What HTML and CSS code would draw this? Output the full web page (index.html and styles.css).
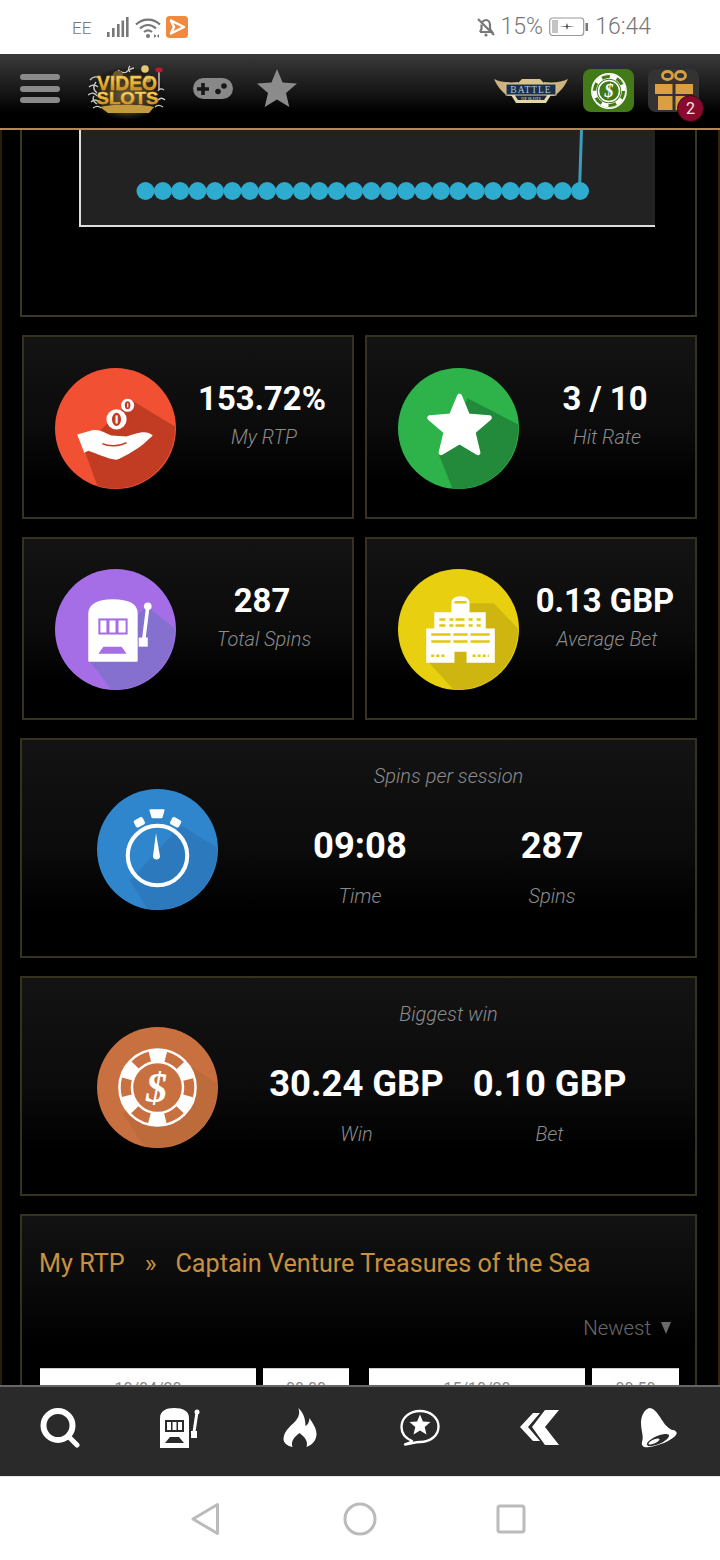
FILE: index.html
```html
<!DOCTYPE html>
<html lang="en">
<head>
<meta charset="utf-8">
<title>My RTP</title>
<link rel="stylesheet" href="styles.css">
</head>
<body>
<div class="screen">
  <div class="status">
    <span class="carrier">EE</span>
    <svg class="ic-signal" viewBox="0 0 22 20"><rect x="0" y="15" width="2.6" height="5"/><rect x="5" y="11" width="2.6" height="9"/><rect x="10" y="7" width="2.6" height="13"/><rect x="14.5" y="3.5" width="2.6" height="16.5"/><rect x="19" y="0" width="2.6" height="20"/></svg>
    <svg class="ic-wifi" viewBox="0 0 26 21"><path class="st" d="M1 7.5C8 1 18 1 25 7.5"/><path class="st" d="M5 11.5C10 7 16 7 21 11.5"/><path class="st" d="M9 15C11.500 13 14.500 13 17 15"/><circle class="sf" cx="13" cy="19" r="2"/><path class="sf" d="M19 17l2.500 2-2.500 2zM24 17l-2 2 2 2z"/></svg>
    <svg class="ic-app" viewBox="0 0 22 22"><rect width="22" height="22" rx="3.500" fill="#ef8b3e"/><path d="M5 4.500L18 11 5 17.500 8 11z" fill="none" stroke="#fff" stroke-width="2.500" stroke-linejoin="round"/></svg>
    <span class="status-fill"></span>
    <svg class="ic-belloff" viewBox="0 0 20 20"><path class="st" d="M4 15h12l-2-3V8c0-3-2-5-4-5-1.500 0-3 .8-3.800 2.200M5.500 7.500V12L4 15"/><path class="st" d="M2 2l16 16"/><circle class="sf" cx="10" cy="18" r="1.600"/></svg>
    <span class="status-text pct">15%</span>
    <svg class="ic-batt" viewBox="0 0 40 20"><rect x=".7" y="1" width="34" height="17.500" rx="3" fill="none" stroke="#999" stroke-width="1.200"/><rect x="3" y="3" width="6" height="13" fill="#c4c4c4"/><path d="M10 10l7-1 1-3 1 3 7 0-7 1-1 3-1-3z" fill="#555"/><rect x="36.500" y="6" width="2.500" height="8" fill="#777"/></svg>
    <span class="status-text clock">16:44</span>
  </div>

  <header class="topbar">
    <div class="burger"><span></span><span></span><span></span></div>
    <svg class="logo" viewBox="0 0 78 58">
      <defs>
        <radialGradient id="glow" cx=".5" cy=".55" r=".5"><stop offset="0" stop-color="#6a5a38"/><stop offset=".7" stop-color="#2e2618"/><stop offset="1" stop-color="#000" stop-opacity="0"/></radialGradient>
        <linearGradient id="gold" x1="0" y1="0" x2="0" y2="1"><stop offset="0" stop-color="#ffe88a"/><stop offset=".55" stop-color="#e8b030"/><stop offset="1" stop-color="#a8700f"/></linearGradient>
      </defs>
      <ellipse cx="39" cy="30" rx="39" ry="28" fill="url(#glow)"/>
      <path d="M2 18c3-4 8-4 10-1M1 25c3-3 7-2 9 0M0 33c4-3 7-2 9 1M3 40c3-3 6-2 8 0M5 46c3-2 6-2 8 0M8 20c-3 4-3 8 1 11M6 34c-2 3 0 6 3 8" class="swirl"/>
      <path d="M76 28c-3-2-5-1-6 1M77 38c-3-3-5-2-7 0M75 45c-3-2-6-2-8 0M30 8c3 3 6 3 9 2M38 10c3-2 5-4 8-4M42 4c-2 2-2 4 0 6" class="swirl"/>
      <circle cx="57" cy="7" r="3.800" fill="#e2c870"/><circle cx="60" cy="17" r="3.400" fill="#a98b55"/><circle cx="30" cy="14" r="5.500" fill="#6a5630"/>
      <path d="M71 9v18" stroke="#ccc" stroke-width="1.400"/><ellipse cx="71" cy="8" rx="3.600" ry="2.400" fill="#c3182c"/>
      <path d="M12 45c10-3 44-3 54 0l-5 6H20z" fill="#c49a3e"/>
      <text class="logo-v" x="39" y="28" text-anchor="middle" textLength="60" lengthAdjust="spacingAndGlyphs">VIDEO</text>
      <text class="logo-s" x="39.500" y="42" text-anchor="middle" textLength="62" lengthAdjust="spacingAndGlyphs">SLOTS</text>
    </svg>
    <svg class="pad" viewBox="0 0 40 22"><rect width="40" height="21" rx="10.500" fill="#888"/><path d="M4 11h12M10 5v12" stroke="#181818" stroke-width="3.600"/><circle cx="31" cy="8" r="2.800" fill="#181818"/><circle cx="25" cy="13.500" r="2.800" fill="#181818"/></svg>
    <svg class="fav" viewBox="0 0 40 38"><polygon points="20,0 25.600,13.400 40,14.500 29,24 32.300,38 20,30.500 7.700,38 11,24 0,14.500 14.400,13.400" fill="#8b8b8b"/></svg>
    <span class="top-fill"></span>
    <svg class="battle" viewBox="0 0 74 26">
      <path d="M0 1C6 4 14 5 24 4V18H14C8 14 3 8 0 1ZM74 1C68 4 60 5 50 4V18H60C66 14 71 8 74 1Z" fill="#cdb47e"/>
      <path d="M24 5L28 1H46L50 5V7H24Z" fill="#d9c48c"/>
      <rect x="12" y="6" width="50" height="11" fill="#16304e" stroke="#d9c48c"/>
      <text class="battle-t" x="37" y="15" text-anchor="middle">BATTLE</text>
      <path d="M17 17H57L52 25H22Z" fill="#e6d7a8"/>
      <path d="M21 17.500H53L50 22H24Z" fill="#1c2a3a"/>
      <text class="battle-s" x="37" y="21.500" text-anchor="middle">OF SLOTS</text>
    </svg>
    <div class="tile tile-green">
      <svg class="tile-chip" viewBox="0 0 36 36"><circle cx="18" cy="18" r="17.200" fill="none" stroke="#fff" stroke-width="1.400"/><circle cx="18" cy="18" r="14.500" fill="none" stroke="#fff" stroke-width="4.500"/><circle cx="18" cy="18" r="14.500" fill="none" stroke="#417a16" stroke-width="3.200" stroke-dasharray="8 7.180"/><circle cx="18" cy="18" r="10.500" fill="#417a16" stroke="#fff" stroke-width="1.500"/><text class="chip-mini" x="18" y="24" text-anchor="middle">$</text></svg>
    </div>
    <div class="tile tile-gift">
      <svg class="gift" viewBox="0 0 38 40"><ellipse cx="12.500" cy="5.500" rx="5" ry="4" fill="none" stroke="#d9a03f" stroke-width="2.800"/><ellipse cx="25.500" cy="5.500" rx="5" ry="4" fill="none" stroke="#d9a03f" stroke-width="2.800"/><rect x="0" y="14" width="17.500" height="10" fill="#d9a03f"/><rect x="20.500" y="14" width="17.500" height="10" fill="#d9a03f"/><rect x="3" y="26" width="14.500" height="14" fill="#d9a03f"/><rect x="20.500" y="26" width="14.500" height="14" fill="#d9a03f"/></svg>
      <span class="badge">2</span>
    </div>
  </header>

  <main class="main">
    <section class="chart-panel">
      <div class="chart">
        <svg class="chart-svg" viewBox="0 0 574 95">
          <path d="M500.500 0L498.500 60" stroke="#3a9dbd" stroke-width="3" fill="none"/>
          <g fill="#2eaccf">
            <circle cx="64.500" cy="61" r="9"/><circle cx="81.900" cy="61" r="9"/><circle cx="99.200" cy="61" r="9"/><circle cx="116.600" cy="61" r="9"/><circle cx="134" cy="61" r="9"/><circle cx="151.400" cy="61" r="9"/><circle cx="168.800" cy="61" r="9"/><circle cx="186.100" cy="61" r="9"/><circle cx="203.500" cy="61" r="9"/><circle cx="220.900" cy="61" r="9"/><circle cx="238.300" cy="61" r="9"/><circle cx="255.700" cy="61" r="9"/><circle cx="273" cy="61" r="9"/><circle cx="290.400" cy="61" r="9"/><circle cx="307.800" cy="61" r="9"/><circle cx="325.200" cy="61" r="9"/><circle cx="342.600" cy="61" r="9"/><circle cx="359.900" cy="61" r="9"/><circle cx="377.300" cy="61" r="9"/><circle cx="394.700" cy="61" r="9"/><circle cx="412.100" cy="61" r="9"/><circle cx="429.500" cy="61" r="9"/><circle cx="446.800" cy="61" r="9"/><circle cx="464.200" cy="61" r="9"/><circle cx="481.600" cy="61" r="9"/><circle cx="499" cy="61" r="9"/>
          </g>
        </svg>
      </div>
    </section>

    <section class="cards">
      <article class="card">
        <svg class="disc" viewBox="0 0 120 120">
          <circle cx="60" cy="60" r="60" fill="#f25033"/>
          <path d="M76 32L119 58A60 60 0 0 1 42 117L28 78Z" fill="#c23c24"/>
          <path d="M22 66L36 62C44 60 50 65 56 67L71 68C76 66 80 65 85 64C89 63 94 64 97 67L88 75C78 83 68 88 61 91C52 90 42 85 33 82L29 84Z" fill="#fff"/>
          <path d="M47 75C53 78 64 78 71 74" stroke="#c23c24" stroke-width="1.600" fill="none"/>
          <circle cx="61" cy="51" r="10" fill="#fff"/><ellipse cx="61" cy="51" rx="4.500" ry="6.500" fill="#c23c24"/><rect x="60" y="47" width="2.200" height="8" fill="#fff"/>
          <circle cx="72" cy="37" r="6.500" fill="#fff"/><ellipse cx="72" cy="37" rx="2.800" ry="4" fill="#c23c24"/><rect x="71.400" y="35" width="1.300" height="4" fill="#fff"/>
        </svg>
        <div class="stat">
          <div class="value">153.72%</div>
          <div class="label">My RTP</div>
        </div>
      </article>
      <article class="card">
        <svg class="disc" viewBox="0 0 120 120">
          <circle cx="60" cy="60" r="60" fill="#2db34a"/>
          <path d="M69 30L119 56A60 60 0 0 1 54 119.500L41 87Z" fill="#228a3a"/>
          <polygon points="61,28 69.200,47.700 90.500,49.400 74.300,63.300 79.200,84 61,73 42.800,84 47.700,63.300 31.500,49.400 52.800,47.700" fill="#fff" stroke="#fff" stroke-width="5" stroke-linejoin="round"/>
        </svg>
        <div class="stat">
          <div class="value">3 / 10</div>
          <div class="label">Hit Rate</div>
        </div>
      </article>
      <article class="card card-low">
        <svg class="disc" viewBox="0 0 120 120">
          <circle cx="60" cy="60" r="60" fill="#a56ee6"/>
          <path d="M91 37L119 59A60 60 0 0 1 56 119.500L34 91Z" fill="#8570d0"/>
          <path d="M34 91V44C34 36 42 31 57 31C73 31 81 36 81 44V91Z" fill="#fff" stroke="#fff" stroke-width="2" stroke-linejoin="round"/>
          <rect x="43" y="49" width="29" height="16" fill="#a56ee6"/><path d="M45 51h6v12h-6zM54 51h6v12h-6zM63 51h7v12h-7z" fill="#fff"/>
          <path d="M43 84L48 77H66L71 84Z" fill="#a56ee6"/>
          <path d="M92 38L88 70" stroke="#fff" stroke-width="3.500"/><circle cx="92" cy="37" r="3.800" fill="#fff"/><rect x="83" y="68" width="9" height="9" fill="#fff"/>
        </svg>
        <div class="stat">
          <div class="value">287</div>
          <div class="label">Total Spins</div>
        </div>
      </article>
      <article class="card card-low">
        <svg class="disc" viewBox="0 0 120 120">
          <circle cx="60" cy="60" r="60" fill="#e8d010"/>
          <path d="M71 34H95L119 59A60 60 0 0 1 55 119.500L30 92Z" fill="#cfb510"/>
          <path d="M28 59H36V43H53V34C53 30 56 27 62 27C68 27 71 30 71 34V43H87V59H96V93H68V82H56V93H28Z" fill="#fff"/>
          <g stroke="#e2c80e" stroke-width="2.500" fill="none">
            <path d="M56 33h12"/>
            <path d="M41 50h6M51 50h4M57 50h9M70 50h4M78 50h4"/>
            <path d="M41 56h6M51 56h4M57 56h9M70 56h4M78 56h4"/>
            <path d="M33 65h19M55 65h14M72 65h19"/>
            <path d="M33 72h19M55 72h14M72 72h19"/>
            <path d="M33 86h14M74 86h16" stroke-dasharray="3 2"/>
          </g>
        </svg>
        <div class="stat">
          <div class="value">0.13 GBP</div>
          <div class="label">Average Bet</div>
        </div>
      </article>
    </section>

    <section class="wide">
      <svg class="disc disc-wide" viewBox="0 0 120 120">
        <circle cx="60" cy="60" r="60" fill="#2f86cc"/>
        <path d="M83 36L119 58A60 60 0 0 1 50 119L33 91Z" fill="#2c7abd"/>
        <circle cx="60" cy="66" r="29.500" fill="none" stroke="#fff" stroke-width="4"/>
        <path d="M53 21H66L64 28H55Z" fill="#fff" stroke="#fff" stroke-width="2" stroke-linejoin="round"/>
        <rect x="37" y="29" width="10" height="8" rx="2" fill="#fff" transform="rotate(-28 42 33)"/>
        <rect x="73" y="29" width="10" height="8" rx="2" fill="#fff" transform="rotate(28 78 33)"/>
        <path d="M58.500 44L55.500 67C55.500 71 62.500 71 62.500 67Z" fill="#fff"/>
      </svg>
      <div class="wide-body">
        <div class="wide-title">Spins per session</div>
        <div class="wide-grid">
          <div class="cell">
            <div class="value value-wide">09:08</div>
            <div class="label label-wide">Time</div>
          </div>
          <div class="cell">
            <div class="value value-wide">287</div>
            <div class="label label-wide">Spins</div>
          </div>
        </div>
      </div>
    </section>

    <section class="wide">
      <svg class="disc disc-wide" viewBox="0 0 120 120">
        <circle cx="60" cy="60" r="60" fill="#c97040"/>
        <path d="M88 36L119 56A60 60 0 0 1 46 118L26 86Z" fill="#be6b3c"/>
        <circle cx="60" cy="60" r="38" fill="none" stroke="#fff" stroke-width="2"/>
        <circle cx="60" cy="60" r="31" fill="none" stroke="#fff" stroke-width="13"/>
        <circle cx="60" cy="60" r="31.500" fill="none" stroke="#c97040" stroke-width="10" stroke-dasharray="17 16" stroke-dashoffset="8.500"/>
        <circle cx="60" cy="60" r="25" fill="#c97040" stroke="#fff" stroke-width="1.800"/>
        <text class="chip-big" x="59" y="74" text-anchor="middle">$</text>
      </svg>
      <div class="wide-body">
        <div class="wide-title">Biggest win</div>
        <div class="wide-grid wide-grid-money">
          <div class="cell">
            <div class="value value-wide">30.24 GBP</div>
            <div class="label label-wide">Win</div>
          </div>
          <div class="cell">
            <div class="value value-wide">0.10 GBP</div>
            <div class="label label-wide">Bet</div>
          </div>
        </div>
      </div>
    </section>

    <section class="history">
      <h2 class="crumbs"><span>My RTP</span><span class="sep">»</span><span>Captain Venture Treasures of the Sea</span></h2>
      <div class="sort"><span>Newest</span><span class="caret"></span></div>
      <div class="sessions">
        <div class="slot slot-date">10/04/20</div>
        <div class="slot slot-time">00:00</div>
        <div class="slot slot-date slot-second">15/10/20</div>
        <div class="slot slot-time slot-last">00:50</div>
      </div>
    </section>
  </main>

  <nav class="tabs">
    <svg class="tab" viewBox="0 0 40 40"><circle cx="18" cy="17.500" r="14.500" fill="none" stroke="#fff" stroke-width="6"/><path d="M29 29l8 8" stroke="#fff" stroke-width="5" stroke-linecap="round"/></svg>
    <svg class="tab" viewBox="0 0 40 40"><path d="M0 40V10C0 3 6 0 14 0C23 0 29 3 29 10V40Z" fill="#fff"/><rect x="5" y="12" width="19" height="12" fill="#2a2a2a"/><path d="M7 14h4v8H7zM12.500 14h4v8h-4zM18 14h4v8h-4z" fill="#fff"/><path d="M5 35L10 29H19L24 35Z" fill="#2a2a2a"/><path d="M37 4L34 24" stroke="#fff" stroke-width="3"/><circle cx="37" cy="4" r="2.500" fill="#fff"/><rect x="31" y="23" width="6" height="7" fill="#fff"/></svg>
    <svg class="tab" viewBox="0 0 33 40"><path d="M15 0C18 9 11 14 6 19C2 23 0 27 0 31C0 35 4 38 9 39C7 33 11 29 16 25C21 29 25 33 23 39C29 37 33 32 33 26C33 20 29 15 26 10C26 14 24 17 22 18C22 11 20 5 15 0Z" fill="#fff"/></svg>
    <svg class="tab" viewBox="0 0 40 40"><path d="M12 33C5 30 1.500 24.500 1.500 19C1.500 9.500 10 3 20 3C30 3 38.500 9.500 38.500 18.500C38.500 28 30 34 20 34C15 34 10 36 5 36.500C8 35.500 10.500 34.500 12 33Z" fill="none" stroke="#fff" stroke-width="2.400" stroke-linejoin="round"/><polygon points="20,6.500 22.900,13.500 30.500,14.100 24.700,19 26.500,26.400 20,22.400 13.500,26.400 15.300,19 9.500,14.100 17.100,13.500" fill="#fff"/></svg>
    <svg class="tab" viewBox="0 0 40 36"><path d="M39 0H25L12 17L25 35H39L25 17Z" fill="#fff"/><path d="M0 17L13 3H20L8 17L20 31H13Z" fill="#fff"/></svg>
    <svg class="tab" viewBox="0 0 38 40"><path d="M8 0C3 2 0 8 0 15C0 23 3 28 1 34C0 38 3 40 8 39C17 38 30 33 35 27C37 24 34 22 31 22C26 20 22 14 19 9C15 3 12 0 8 0Z" fill="#fff"/><ellipse cx="17" cy="32" rx="12" ry="4" transform="rotate(-24 17 32)" fill="#2a2a2a"/><ellipse cx="13" cy="33.500" rx="6" ry="2" transform="rotate(-24 13 33.500)" fill="#fff"/></svg>
  </nav>

  <div class="sysbar">
    <svg class="sys sys-back" viewBox="0 0 30 34"><path d="M27.500 2.500V31.500L3 17Z" fill="none" stroke="#bbb" stroke-width="3" stroke-linejoin="round"/></svg>
    <svg class="sys sys-home" viewBox="0 0 34 34"><circle cx="17" cy="17" r="15" fill="none" stroke="#bbb" stroke-width="3"/></svg>
    <svg class="sys sys-recent" viewBox="0 0 30 30"><rect x="2" y="2" width="26" height="26" rx="2" fill="none" stroke="#bbb" stroke-width="3"/></svg>
  </div>
</div>
</body>
</html>
```

FILE: styles.css
```css
* { box-sizing: border-box; }
html, body { margin: 0; padding: 0; background: #fff; }
body { width: 720px; height: 1560px; overflow: hidden; font-family: Roboto, "Liberation Sans", sans-serif; }
svg { display: block; flex: none; }

.screen { display: flex; flex-direction: column; width: 720px; height: 1560px; }

/* status bar */
.status { display: flex; align-items: center; height: 54px; padding-left: 72px; padding-right: 69px; background: #fff; color: #777; flex: none; }
.carrier { font-size: 17px; font-weight: 300; width: 20px; margin-top: 2px; }
.ic-signal { width: 22px; height: 20px; margin-left: 15px; fill: #777; }
.ic-wifi { width: 26px; height: 21px; margin-left: 6px; }
.st { fill: none; stroke: #777; stroke-width: 2.2; }
.sf { fill: #777; }
.ic-app { width: 22px; height: 22px; margin-left: 5px; }
.status-fill { flex: 1; }
.ic-belloff { width: 20px; height: 20px; }
.status-text { font-size: 23px; font-weight: 300; line-height: 28px; }
.pct { margin-left: 5px; }
.ic-batt { width: 40px; height: 20px; margin-left: 6px; }
.clock { margin-left: 6px; }

/* top bar */
.topbar { display: flex; align-items: flex-start; flex: none; height: 76px; padding-left: 20px; background: linear-gradient(#3a3a3a 0, #141414 40px, #000 58px); border-bottom: 2px solid #b08a50; }
.burger { display: flex; flex-direction: column; gap: 5.500px; width: 40px; margin-top: 20px; }
.burger span { height: 6px; border-radius: 3px; background: #8a8a8a; }
.logo { width: 78px; height: 58px; margin-left: 28px; margin-top: 8px; }
.swirl { fill: none; stroke: #c8c8c8; stroke-width: 1.300; }
.logo-v, .logo-s { font-family: "Liberation Sans", sans-serif; font-weight: 700; fill: url(#gold); stroke: #e8b030; stroke-width: .4px; }
.logo-v { font-size: 21px; }
.logo-s { font-size: 16px; }
.pad { width: 40px; height: 22px; margin-left: 27px; margin-top: 24px; }
.fav { width: 40px; height: 38px; margin-left: 24px; margin-top: 15px; }
.top-fill { flex: 1; }
.battle { width: 74px; height: 26px; margin-top: 24px; }
.battle-t { font-family: "Liberation Serif", serif; font-size: 9.500px; letter-spacing: 1px; fill: #b9c6d8; }
.battle-s { font-family: "Liberation Serif", serif; font-size: 4px; font-weight: 700; fill: #d9c48c; }
.tile { position: relative; display: flex; align-items: center; justify-content: center; width: 51px; height: 43px; border-radius: 8px; margin-top: 15px; }
.tile-green { background: #417a16; margin-left: 15px; }
.tile-gift { background: #333; margin-left: 14px; margin-right: 21px; }
.tile-chip { width: 36px; height: 36px; }
.chip-mini { font-family: "Liberation Serif", serif; font-size: 18px; font-style: italic; font-weight: 700; fill: #fff; }
.chip-big { font-family: "Liberation Serif", serif; font-size: 42px; font-style: italic; font-weight: 700; fill: #fff; }
.gift { width: 38px; height: 40px; margin-top: -2px; }
.badge { position: absolute; left: 29px; top: 26px; width: 27px; height: 27px; border-radius: 50%; background: #8a0a2e; border: 1px solid #3a0a14; color: #f4e6e6; font-size: 16px; line-height: 25px; text-align: center; }

/* main */
.main { flex: 1; min-height: 0; overflow: hidden; background: #000; border-left: 2px solid #2a1e0a; border-right: 2px solid #33240e; padding: 0 21px 0 18px; }
.chart-panel { height: 187px; margin-bottom: 18px; border: 2px solid #3a3722; border-top: 0; padding-left: 57px; padding-right: 40px; }
.chart { height: 97px; background: #222; border-left: 2px solid #ddd; border-bottom: 2px solid #ddd; }
.chart-svg { width: 574px; height: 95px; }

.cards { display: grid; grid-template-columns: 1fr 1fr; grid-template-rows: 184px 183px; column-gap: 11px; row-gap: 18px; margin: 0 0 18px 2px; }
.card, .wide { border: 2px solid #35321f; background: linear-gradient(#131313 0, #0b0b0b 50%, #000 80%); }
.history { border: 2px solid #35321f; background: linear-gradient(#121212 0, #0b0b0b 60px, #000 130px); }
.card { display: flex; align-items: flex-start; padding: 31px 0 0 31px; }
.card-low .disc { margin-top: -1px; }
.disc { width: 121px; height: 121px; }
.stat { width: 160px; margin-left: 6px; margin-top: 12px; text-align: center; }
.value { font-size: 32.800px; font-weight: 700; line-height: 38px; color: #fff; white-space: nowrap; }
.value-wide { font-size: 36.400px; }
.label { font-size: 20px; font-weight: 300; font-style: italic; line-height: 24px; color: #8b8b8b; margin-top: 7px; padding-left: 4px; white-space: nowrap; }

.wide { display: flex; align-items: flex-start; height: 220px; margin-bottom: 18px; }
.disc-wide { margin-left: 75px; margin-top: 49px; }
.wide-body { flex: 1; }
.wide-title { font-size: 20px; font-weight: 300; font-style: italic; line-height: 24px; color: #8b8b8b; text-align: center; margin-top: 24px; padding-right: 16px; }
.wide-grid { display: grid; grid-template-columns: 192px 192px; margin-top: 39px; margin-left: 46px; }
.wide-grid-money { grid-template-columns: 193px 193px; margin-left: 42px; }
.cell { display: flex; flex-direction: column; align-items: center; }
.label-wide { margin-top: 19px; padding-left: 0; }

.history { height: 300px; padding: 33px 0 0 17px; }
.crumbs { display: flex; margin: 0; font-size: 25.200px; font-weight: 400; line-height: 30px; color: #c8913f; white-space: nowrap; }
.sep { margin: 0 19px 0 20px; }
.sort { display: flex; justify-content: flex-end; align-items: center; gap: 10px; margin-top: 37px; padding-right: 24px; font-size: 20.400px; font-weight: 300; line-height: 24px; color: #6a6a6a; }
.caret { width: 0; height: 0; border-left: 5.500px solid transparent; border-right: 5.500px solid transparent; border-top: 12px solid #6a6a6a; }
.sessions { display: flex; gap: 7px; margin-top: 28px; margin-left: 1px; }
.slot { height: 60px; padding-top: 10px; background: #fff; border-top: 1px solid #ccc; color: #888; font-size: 16px; line-height: 20px; text-align: center; }
.slot-date { width: 216px; }
.slot-time { width: 86px; }
.slot-last { width: 87px; }
.slot-second { margin-left: 13px; }

/* bottom tabs */
.tabs { display: grid; grid-template-columns: repeat(6, 120px); justify-items: center; align-items: center; flex: none; height: 92px; padding-bottom: 7px; background: #2a2a2a; border-top: 2px solid #666; border-bottom: 1px solid #e8e8e8; }
.tab { height: 40px; width: 40px; }
.sysbar { display: flex; align-items: center; flex: none; height: 83px; padding-left: 190px; background: #fff; }
.sys-back { width: 30px; height: 34px; }
.sys-home { width: 34px; height: 34px; margin-left: 123px; }
.sys-recent { width: 30px; height: 30px; margin-left: 119px; }
```
